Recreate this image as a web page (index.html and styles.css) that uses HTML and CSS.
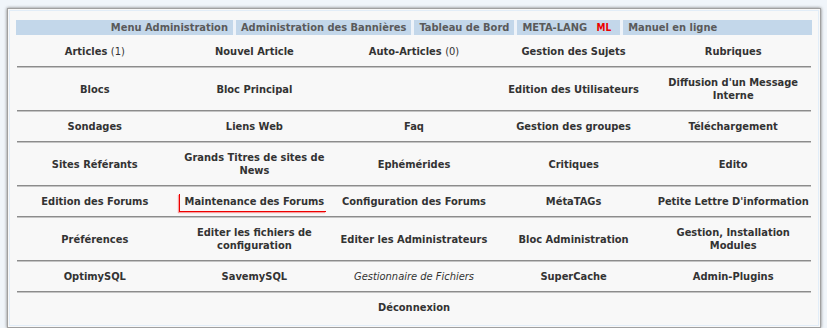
FILE: index.html
```html
<!DOCTYPE html>
<html lang="fr">
<head>
<meta charset="utf-8">
<title>Administration</title>
<link rel="stylesheet" href="styles.css">
</head>
<body>
<div class="panel">
  <div class="inner">
    <div class="topbar">
      <span class="tb-item">Menu Administration</span>
      <span class="tb-item">Administration des Bannières</span>
      <span class="tb-item">Tableau de Bord</span>
      <span class="tb-item">META-LANG <span class="ml">ML</span></span>
      <span class="tb-item">Manuel en ligne</span>
    </div>
    <div class="menu">
      <div class="cell">Articles <span class="count">(1)</span></div>
      <div class="cell">Nouvel Article</div>
      <div class="cell">Auto-Articles <span class="count">(0)</span></div>
      <div class="cell">Gestion des Sujets</div>
      <div class="cell">Rubriques</div>
      <div class="sep"></div>

      <div class="cell">Blocs</div>
      <div class="cell">Bloc Principal</div>
      <div class="cell"></div>
      <div class="cell">Edition des Utilisateurs</div>
      <div class="cell">Diffusion d'un Message Interne</div>
      <div class="sep"></div>

      <div class="cell">Sondages</div>
      <div class="cell">Liens Web</div>
      <div class="cell">Faq</div>
      <div class="cell">Gestion des groupes</div>
      <div class="cell">Téléchargement</div>
      <div class="sep"></div>

      <div class="cell">Sites Référants</div>
      <div class="cell">Grands Titres de sites de News</div>
      <div class="cell">Ephémérides</div>
      <div class="cell">Critiques</div>
      <div class="cell">Edito</div>
      <div class="sep"></div>

      <div class="cell">Edition des Forums</div>
      <div class="cell"><span class="active">Maintenance des Forums</span></div>
      <div class="cell">Configuration des Forums</div>
      <div class="cell">MétaTAGs</div>
      <div class="cell">Petite Lettre D'information</div>
      <div class="sep"></div>

      <div class="cell">Préférences</div>
      <div class="cell">Editer les fichiers de configuration</div>
      <div class="cell">Editer les Administrateurs</div>
      <div class="cell">Bloc Administration</div>
      <div class="cell">Gestion, Installation Modules</div>
      <div class="sep"></div>

      <div class="cell">OptimySQL</div>
      <div class="cell">SavemySQL</div>
      <div class="cell italic">Gestionnaire de Fichiers</div>
      <div class="cell">SuperCache</div>
      <div class="cell">Admin-Plugins</div>
      <div class="sep"></div>

      <div class="cell full">Déconnexion</div>
    </div>
  </div>
</div>
</body>
</html>
```
FILE: styles.css
```css
html, body {
  margin: 0;
  padding: 0;
}
body {
  background: #f0f5fa;
  font-family: "DejaVu Sans Condensed", "DejaVu Sans", Verdana, sans-serif;
  font-size: 11px;
  color: #333;
  overflow: hidden;
}
.panel {
  margin: 8px 6px 0 7px;
  background: #f8f8f8;
  border: 1px solid #a0a0a0;
  box-shadow: 0 0 3px #777;
  padding: 1px;
}
.inner {
  border: 1px solid #e2edf8;
  padding: 9px 6px 3px 6px;
}
.topbar {
  background: #c3d7ea;
  display: flex;
  justify-content: center;
  height: 15px;
  line-height: 15px;
  margin: 0 0 2px 0;
}
.tb-item {
  font-weight: bold;
  color: #5a5a5a;
  padding: 0 5px;
  border-left: 3px solid #eef3f9;
}
.tb-item:first-child {
  border-left: none;
}
.ml {
  color: #e00;
  font-size: 10px;
  margin-left: 6px;
  margin-right: 4px;
}
.menu {
  display: grid;
  grid-template-columns: repeat(5, 1fr);
  align-items: center;
  margin: 0 -1px;
}
.cell {
  font-weight: bold;
  text-align: center;
  line-height: 13px;
  padding: 8px 1px;
}
.count {
  font-weight: normal;
}
.italic {
  font-weight: normal;
  font-style: italic;
}
.full {
  grid-column: 1 / -1;
}
.sep {
  grid-column: 1 / -1;
  height: 1px;
  margin: 0 2px;
  border-top: 1px solid #8c8c8c;
  background: #c4c4c4;
}
.active {
  display: inline-block;
  vertical-align: top;
  padding: 1px 2px 3px 5px;
  margin: -1px 0 -4px -4px;
  border-left: 1px solid #e00;
  border-bottom: 1px solid #e00;
  box-shadow: -1px 1px 1px #f7a0a0;
}
```
